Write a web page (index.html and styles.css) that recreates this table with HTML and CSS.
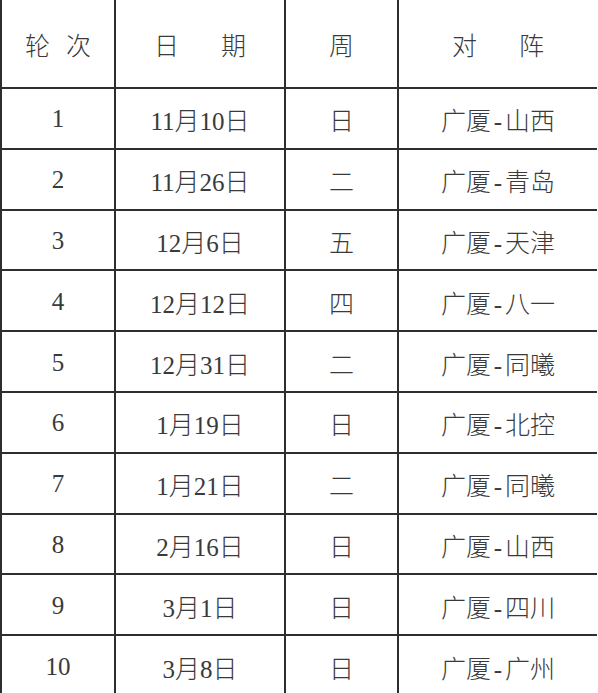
FILE: index.html
```html
<!DOCTYPE html>
<html lang="zh-CN">
<head>
<meta charset="utf-8">
<title>赛程</title>
<link rel="stylesheet" href="styles.css">
</head>
<body>
<table class="schedule">
  <colgroup>
    <col class="c1"><col class="c2"><col class="c3"><col class="c4">
  </colgroup>
  <thead>
    <tr class="head">
      <th><span class="hd hd-a"><span>轮</span><span>次</span></span></th>
      <th><span class="hd hd-b"><span>日</span><span>期</span></span></th>
      <th>周</th>
      <th><span class="hd hd-b"><span>对</span><span>阵</span></span></th>
    </tr>
  </thead>
  <tbody>
    <tr><td>1</td><td>11月10日</td><td>日</td><td>广厦<span class="dash">-</span>山西</td></tr>
    <tr><td>2</td><td>11月26日</td><td>二</td><td>广厦<span class="dash">-</span>青岛</td></tr>
    <tr><td>3</td><td>12月6日</td><td>五</td><td>广厦<span class="dash">-</span>天津</td></tr>
    <tr><td>4</td><td>12月12日</td><td>四</td><td>广厦<span class="dash">-</span>八一</td></tr>
    <tr><td>5</td><td>12月31日</td><td>二</td><td>广厦<span class="dash">-</span>同曦</td></tr>
    <tr><td>6</td><td>1月19日</td><td>日</td><td>广厦<span class="dash">-</span>北控</td></tr>
    <tr><td>7</td><td>1月21日</td><td>二</td><td>广厦<span class="dash">-</span>同曦</td></tr>
    <tr><td>8</td><td>2月16日</td><td>日</td><td>广厦<span class="dash">-</span>山西</td></tr>
    <tr><td>9</td><td>3月1日</td><td>日</td><td>广厦<span class="dash">-</span>四川</td></tr>
    <tr><td>10</td><td>3月8日</td><td>日</td><td>广厦<span class="dash">-</span>广州</td></tr>
  </tbody>
</table>
</body>
</html>
```
FILE: styles.css
```css
html, body {
  margin: 0;
  padding: 0;
  background: #ffffff;
}
body {
  width: 598px;
  height: 693px;
  overflow: hidden;
}
.schedule {
  border-collapse: collapse;
  table-layout: fixed;
  width: 596px;
  margin-left: 0;
  font-family: "Liberation Serif", "Noto Sans CJK SC", serif;
  font-size: 25px;
  font-weight: 300;
  color: #3a3a3a;
}
.c1 { width: 114px; }
.c2 { width: 170px; }
.c3 { width: 113px; }
.c4 { width: 199px; }
.schedule th,
.schedule td {
  border: 2px solid #2e2e2e;
  text-align: center;
  vertical-align: middle;
  padding: 0;
  font-weight: 300;
}
.schedule td {
  padding-top: 2px;
}
.schedule thead th {
  border-top: none;
}
.schedule th:last-child,
.schedule td:last-child {
  border-right: none;
}
.head {
  height: 88px;
}
.schedule tbody tr {
  height: 60.8px;
}
.hd {
  display: inline-flex;
  align-items: center;
}
.hd-a { gap: 16px; }
.hd-b { gap: 42px; }
.dash {
  display: inline-block;
  width: 0.55em;
  text-align: center;
}
```
